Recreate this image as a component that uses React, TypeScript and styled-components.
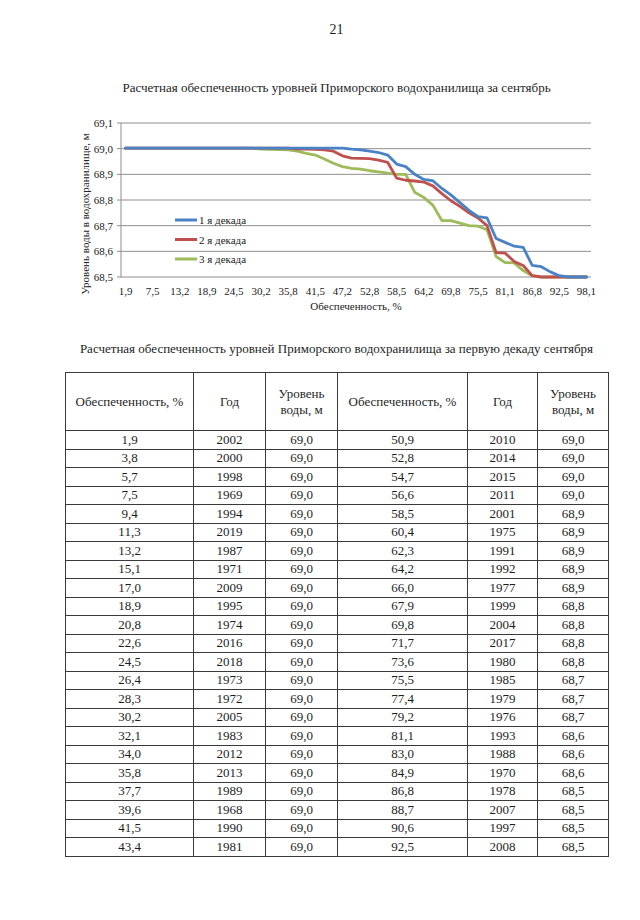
import React from "react";
import styled, { createGlobalStyle } from "styled-components";

const Global = createGlobalStyle`
  html, body { margin: 0; padding: 0; background: #ffffff; }
  body { font-family: "Liberation Serif", "Times New Roman", serif; color: #1e1e1e; }
`;

const Page = styled.div`
  width: 640px;
  height: 920px;
  box-sizing: border-box;
  padding: 22px 0 0 60px;
  display: flex;
  flex-direction: column;
  overflow: hidden;
`;

const Column = styled.div`
  width: 553px;
  display: flex;
  flex-direction: column;
  align-items: stretch;
`;

const PageNumber = styled.div`
  text-align: center;
  font-size: 14px;
  line-height: 16px;
  height: 16px;
`;

const Caption = styled.div<{ $top: number; $size: number }>`
  margin-top: ${(p) => p.$top}px;
  text-align: center;
  font-size: ${(p) => p.$size}px;
  line-height: 16px;
  height: 16px;
  white-space: nowrap;
`;

const ChartSvg = styled.svg`
  display: block;
  margin-top: 14px;
  font-family: "Liberation Serif", "Times New Roman", serif;
`;

const Table = styled.table`
  margin: 15px 0 0 5px;
  width: 543px;
  border-collapse: collapse;
  table-layout: fixed;
  font-size: 13px;
  border: 1.3px solid #3a3a3a;
`;

const HeadCell = styled.th`
  height: 57px;
  padding: 0 2px;
  font-weight: normal;
  line-height: 16px;
  text-align: center;
  vertical-align: middle;
  border: 1px solid #3a3a3a;
`;

const Cell = styled.td`
  height: 17.5px;
  padding: 0;
  line-height: 16px;
  text-align: center;
  vertical-align: middle;
  border: 1px solid #3a3a3a;
`;

// ---- chart data ----
const LABELS = [
  "1,9", "7,5", "13,2", "18,9", "24,5", "30,2", "35,8", "41,5", "47,2",
  "52,8", "58,5", "64,2", "69,8", "75,5", "81,1", "86,8", "92,5", "98,1",
];

function fill(from: number, to: number, v: number): number[] {
  return Array.from({ length: to - from + 1 }, () => v);
}

const BLUE = [
  ...fill(0, 24, 69.002),
  68.998, 68.995, 68.99, 68.985, 68.975, 68.94, 68.93, 68.9, 68.88, 68.875,
  68.845, 68.82, 68.79, 68.76, 68.735, 68.73, 68.65, 68.635, 68.62, 68.615,
  68.545, 68.54, 68.52, 68.505, 68.5, 68.5, 68.5,
];
const RED = [
  ...fill(0, 18, 69.002),
  68.998, 68.998, 68.997, 68.995, 68.99, 68.972, 68.963, 68.962, 68.961,
  68.955, 68.947, 68.885, 68.877, 68.874, 68.87, 68.855, 68.825, 68.797,
  68.775, 68.75, 68.73, 68.7, 68.595, 68.593, 68.56, 68.545, 68.505,
  ...fill(46, 51, 68.5),
];
const GREEN = [
  ...fill(0, 14, 69.002),
  68.998, 68.997, 68.996, 68.995, 68.99, 68.982, 68.975, 68.96, 68.943,
  68.93, 68.923, 68.92, 68.914, 68.91, 68.905, 68.9, 68.9, 68.83, 68.81,
  68.78, 68.72, 68.72, 68.71, 68.7, 68.698, 68.684, 68.58, 68.556, 68.555,
  68.525, 68.505, ...fill(46, 51, 68.5),
];

const PL = 61;
const PR = 531;
const PT = 13;
const PB = 167;
const STEP = (PR - PL) / 52;
const xOf = (i: number) => PL + (i + 0.5) * STEP;
const yOf = (v: number) => PT + ((69.1 - v) / 0.6) * (PB - PT);

const pathOf = (vals: number[]) =>
  vals.map((v, i) => `${i === 0 ? "M" : "L"}${xOf(i).toFixed(2)},${yOf(v).toFixed(2)}`).join(" ");

const SERIES = [
  { name: "1 я декада", color: "#4a82c6", data: BLUE },
  { name: "2 я декада", color: "#c0504d", data: RED },
  { name: "3 я декада", color: "#9dbb5a", data: GREEN },
];

const Y_TICKS = ["69,1", "69,0", "68,9", "68,8", "68,7", "68,6", "68,5"];

function Chart() {
  return (
    <ChartSvg width={553} height={205} viewBox="0 0 553 205">
      {Y_TICKS.map((t, k) => {
        const y = PT + (k * (PB - PT)) / 6;
        return (
          <g key={t}>
            <line x1={PL} x2={PR} y1={y} y2={y} stroke="#8e8e8e" strokeWidth={1} />
            <line x1={PL - 4} x2={PL} y1={y} y2={y} stroke="#8e8e8e" strokeWidth={1} />
            <text x={PL - 8} y={y + 4} fontSize={11} textAnchor="end" fill="#222">
              {t}
            </text>
          </g>
        );
      })}
      <line x1={PL} x2={PL} y1={PT} y2={PB} stroke="#8e8e8e" strokeWidth={1} />
      {LABELS.map((l, k) => (
        <text key={l} x={xOf(k * 3)} y={185} fontSize={11} textAnchor="middle" fill="#222">
          {l}
        </text>
      ))}
      <text x={(PL + PR) / 2} y={200} fontSize={11} textAnchor="middle" fill="#222">
        Обеспеченность, %
      </text>
      <text
        x={0}
        y={0}
        fontSize={11}
        textAnchor="middle"
        fill="#222"
        transform="translate(29,104) rotate(-90)"
      >
        Уровень воды в водохранилище, м
      </text>
      {SERIES.slice().reverse().map((s) => (
        <path
          key={s.name}
          d={pathOf(s.data)}
          fill="none"
          stroke={s.color}
          strokeWidth={2.8}
          strokeLinejoin="round"
          strokeLinecap="round"
        />
      ))}
      {SERIES.map((s, k) => {
        const y = 110 + k * 19.5;
        return (
          <g key={s.name}>
            <line x1={115} x2={137} y1={y} y2={y} stroke={s.color} strokeWidth={3} />
            <text x={139} y={y + 4} fontSize={11} fill="#222">
              {s.name}
            </text>
          </g>
        );
      })}
    </ChartSvg>
  );
}

// ---- table data ----
type Row = [string, string, string, string, string, string];
const ROWS: Row[] = [
  ["1,9", "2002", "69,0", "50,9", "2010", "69,0"],
  ["3,8", "2000", "69,0", "52,8", "2014", "69,0"],
  ["5,7", "1998", "69,0", "54,7", "2015", "69,0"],
  ["7,5", "1969", "69,0", "56,6", "2011", "69,0"],
  ["9,4", "1994", "69,0", "58,5", "2001", "68,9"],
  ["11,3", "2019", "69,0", "60,4", "1975", "68,9"],
  ["13,2", "1987", "69,0", "62,3", "1991", "68,9"],
  ["15,1", "1971", "69,0", "64,2", "1992", "68,9"],
  ["17,0", "2009", "69,0", "66,0", "1977", "68,9"],
  ["18,9", "1995", "69,0", "67,9", "1999", "68,8"],
  ["20,8", "1974", "69,0", "69,8", "2004", "68,8"],
  ["22,6", "2016", "69,0", "71,7", "2017", "68,8"],
  ["24,5", "2018", "69,0", "73,6", "1980", "68,8"],
  ["26,4", "1973", "69,0", "75,5", "1985", "68,7"],
  ["28,3", "1972", "69,0", "77,4", "1979", "68,7"],
  ["30,2", "2005", "69,0", "79,2", "1976", "68,7"],
  ["32,1", "1983", "69,0", "81,1", "1993", "68,6"],
  ["34,0", "2012", "69,0", "83,0", "1988", "68,6"],
  ["35,8", "2013", "69,0", "84,9", "1970", "68,6"],
  ["37,7", "1989", "69,0", "86,8", "1978", "68,5"],
  ["39,6", "1968", "69,0", "88,7", "2007", "68,5"],
  ["41,5", "1990", "69,0", "90,6", "1997", "68,5"],
  ["43,4", "1981", "69,0", "92,5", "2008", "68,5"],
];

const COLS = [128, 72, 72, 130, 70, 71];

export default function App() {
  return (
    <>
      <Global />
      <Page>
        <Column>
          <PageNumber>21</PageNumber>
          <Caption $top={42} $size={13}>
            Расчетная обеспеченность уровней Приморского водохранилища за сентябрь
          </Caption>
          <Chart />
          <Caption $top={26} $size={13}>
            Расчетная обеспеченность уровней Приморского водохранилища за первую декаду сентября
          </Caption>
          <Table>
            <colgroup>
              {COLS.map((w, i) => (
                <col key={i} style={{ width: w }} />
              ))}
            </colgroup>
            <thead>
              <tr>
                <HeadCell>Обеспеченность, %</HeadCell>
                <HeadCell>Год</HeadCell>
                <HeadCell>
                  Уровень
                  <br />
                  воды, м
                </HeadCell>
                <HeadCell>Обеспеченность, %</HeadCell>
                <HeadCell>Год</HeadCell>
                <HeadCell>
                  Уровень
                  <br />
                  воды, м
                </HeadCell>
              </tr>
            </thead>
            <tbody>
              {ROWS.map((r, i) => (
                <tr key={i}>
                  {r.map((c, j) => (
                    <Cell key={j}>{c}</Cell>
                  ))}
                </tr>
              ))}
            </tbody>
          </Table>
        </Column>
      </Page>
    </>
  );
}
